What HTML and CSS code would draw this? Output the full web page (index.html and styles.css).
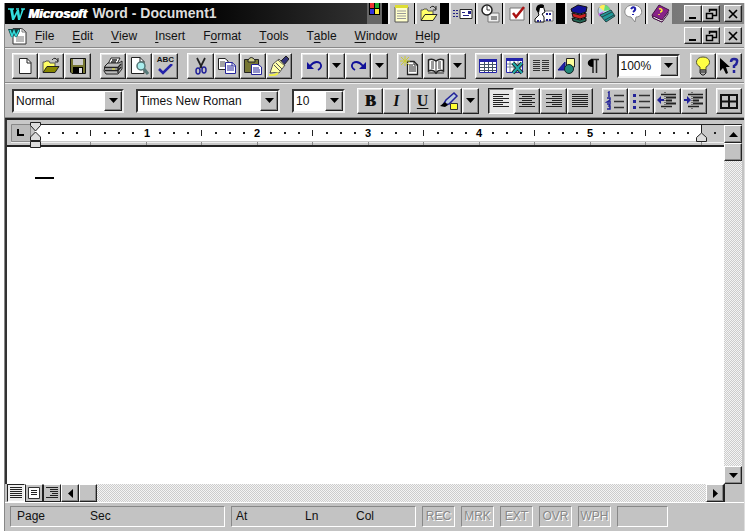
FILE: index.html
```html
<!DOCTYPE html>
<html lang="en">
<head>
<meta charset="utf-8">
<title>Microsoft Word - Document1</title>
<link rel="stylesheet" href="styles.css">
</head>
<body>
<svg class="defs" aria-hidden="true">
  <symbol id="down" viewBox="0 0 9 5"><path d="M0 0H9L4.500 5Z"/></symbol>
  <symbol id="min" viewBox="0 0 14 12"><path d="M3 9H10V11H3Z"/></symbol>
  <symbol id="restore" viewBox="0 0 14 12"><path d="M5.500 4V1.500H12.500V7.500H9M5 2H13M2.500 5.500H8.500V10.500H2.500ZM2 5.500H9" fill="none" stroke="#000" stroke-width="1.500"/></symbol>
  <symbol id="close" viewBox="0 0 14 12"><path d="M3 2L11 10M11 2L3 10" stroke="#000" stroke-width="1.700"/></symbol>
  <symbol id="folder" viewBox="0 0 20 20"><path d="M2 16V6H4L5 5H8L9 7H14V10" fill="#ff6" stroke="#555"/><path d="M2 16.500L6 10.500H18L14 16.500Z" fill="var(--front,#880)" stroke="#222"/><path d="M11 4Q14 0 17 5M17 2V6H14" fill="none" stroke="#222"/></symbol>
  <symbol id="lines-left" viewBox="0 0 20 20"><path d="M2 3.500H18M2 5.500H12M2 7.500H18M2 9.500H12M2 11.500H18M2 13.500H12M2 15.500H18" stroke="#222"/></symbol>
  <symbol id="lines-center" viewBox="0 0 20 20"><path d="M2 3.500H18M5 5.500H15M2 7.500H18M5 9.500H15M2 11.500H18M5 13.500H15M2 15.500H18" stroke="#222"/></symbol>
  <symbol id="lines-right" viewBox="0 0 20 20"><path d="M2 3.500H18M8 5.500H18M2 7.500H18M8 9.500H18M2 11.500H18M8 13.500H18M2 15.500H18" stroke="#222"/></symbol>
  <symbol id="lines-full" viewBox="0 0 20 20"><path d="M2 3.500H18M2 5.500H18M2 7.500H18M2 9.500H18M2 11.500H18M2 13.500H18M2 15.500H18" stroke="#222"/></symbol>
  <symbol id="undo" viewBox="0 0 20 20"><path d="M2 6V13H9Z" fill="#119"/><path d="M5 10Q10 4 15 7Q18 11 13 14" fill="none" stroke="#119" stroke-width="1.800"/></symbol>
  <symbol id="w" viewBox="0 0 18 16"><path d="M1 3H7M9 3H12M14 3H18" stroke="#3dd" stroke-width="1.500"/><path d="M3 3H6L7 10L10 4H12L13 10L15 3H17L13 14H11L10 8L7 14H5Z" fill="#3dd"/></symbol>
</svg>

<div class="window">
  <header class="titlebar">
    <svg class="logo"><use href="#w"/></svg>
    <h1><em>Microsoft</em> Word - Document1</h1>
    <div class="office">
      <span class="flag"><svg viewBox="0 0 15 20"><path d="M2 0H13V12H2Z"/><path d="M3 0H7V5H3Z" fill="#e33"/><path d="M8 0H12V5H8Z" fill="#2a3"/><path d="M3 6H7V11H3Z" fill="#33d"/><path d="M8 6H12V11H8Z" fill="#fe3"/></svg></span>
      <div class="set">
        <button aria-label="New document"><svg viewBox="0 0 20 20"><path d="M3 3H16V18H3Z" fill="#ffc" stroke="#555"/><path d="M3 1H16V4H3Z" fill="#dd3"/><path d="M5 7H14M5 9.500H14M5 12H14M5 14.500H14" stroke="#999"/></svg></button>
        <button aria-label="Open document" class="pale"><svg><use href="#folder"/></svg></button>
      </div>
      <div class="set">
        <button aria-label="Send message"><svg viewBox="0 0 20 20"><path d="M0 6.500H5M0 9.500H5M0 12.500H5" stroke="#228" stroke-dasharray="2 1"/><path d="M7 5.500H19V14.500H7Z" fill="#fff" stroke="#222"/><path d="M9 8.500H12M10 11.500H16" stroke="#228"/><path d="M15 7H18V10H15Z" fill="#228"/></svg></button>
        <button aria-label="Appointment"><svg viewBox="0 0 20 20"><path d="M8 9H19V18H8Z" fill="#eee" stroke="#777"/><circle cx="7" cy="6" r="5" fill="#fff" stroke="#222" stroke-width="1.500"/><path d="M7 2V6H10M11 13H17M11 15H17" fill="none" stroke="#333"/></svg></button>
        <button aria-label="Task"><svg viewBox="0 0 20 20"><path d="M3 4H17V16H3Z" fill="#fff" stroke="#777"/><path d="M6 9L9 13L17 3" fill="none" stroke="#a11" stroke-width="2.500"/></svg></button>
        <button aria-label="Contact"><svg viewBox="0 0 20 20"><path d="M8 7H19V17H8Z" fill="#fff" stroke="#777"/><path d="M3 5Q4 0 9 1L11 8L8 10L10 13V18H1V15L5 11Z" fill="#fff" stroke="#111"/><path d="M2 6Q2 -1 10 1L9 4H6L5 9Z"/><path d="M12 10H17M3 17H7M12 16H18" stroke="#228" stroke-width="2" stroke-dasharray="2 1"/></svg></button>
      </div>
      <div class="set">
        <button aria-label="Bookshelf"><svg viewBox="0 0 20 20"><path d="M2 5L9 1L18 3L17 8L11 10L3 8Z" fill="#119" stroke="#111"/><path d="M3 9L11 11L17 9V13L11 15L4 13Z" fill="#c22" stroke="#111"/><path d="M3 14L11 16L17 14V17L11 19L4 17Z" fill="#265" stroke="#111"/></svg></button>
        <button aria-label="Schedule"><svg viewBox="0 0 20 20"><circle cx="8" cy="7" r="6" fill="#bde" stroke="#888"/><path d="M8 7L3 3Q6 0 9 1Z" fill="#fe5"/><path d="M8 7L9 1Q13 2 14 6Z" fill="#6d7"/><path d="M8 7L2 10L4 13Z" fill="#b6d"/><path d="M4 11L15 6L19 12L10 18Z" fill="#299" stroke="#244"/><path d="M6 13L16 8M9 16L18 11" stroke="#244"/></svg></button>
        <button aria-label="Answer wizard"><svg viewBox="0 0 20 20"><path d="M10 1C21 1 21 13 13 13L12 18L8 13C-1 13 0 1 10 1Z" fill="#fff" stroke="#888"/><path d="M8 5Q10 2 12 4Q13 6 10 8M10 10V11" fill="none" stroke="#22a" stroke-width="2"/></svg></button>
        <button aria-label="Reference"><svg viewBox="0 0 20 20"><path d="M2 11L9 1L19 6L12 18L3 14Z" fill="#828" stroke="#414"/><path d="M3 12L12 16L18 8V10L12 18L3 14Z" fill="#fff" stroke="#414"/><path d="M9 5Q11 4 12 6Q12 8 10 8M9 10V11" fill="none" stroke="#fe3" stroke-width="1.500"/></svg></button>
      </div>
    </div>
    <div class="controls">
      <button aria-label="Minimize"><svg><use href="#min"/></svg></button><button aria-label="Restore"><svg><use href="#restore"/></svg></button><button aria-label="Close"><svg><use href="#close"/></svg></button>
    </div>
  </header>

  <nav class="menubar">
    <svg class="docicon" viewBox="0 0 20 18"><path d="M5 1.500H14L18 5V17H5Z" fill="#fff" stroke="#333"/><path d="M14 1V5H18M8 10H16M8 12H16M8 14H16" fill="none" stroke="#777"/><path d="M0 2H12V4L9 10H7L6 8L5 10H3Z" fill="#144"/><path d="M2 3L4 9L6 4L8 9L11 3" fill="none" stroke="#3dd" stroke-width="1.500"/></svg>
    <button><u>F</u>ile</button><button><u>E</u>dit</button><button><u>V</u>iew</button><button><u>I</u>nsert</button><button>F<u>o</u>rmat</button><button><u>T</u>ools</button><button>T<u>a</u>ble</button><button><u>W</u>indow</button><button><u>H</u>elp</button>
    <div class="controls">
      <button aria-label="Minimize document"><svg><use href="#min"/></svg></button><button aria-label="Restore document"><svg><use href="#restore"/></svg></button><button aria-label="Close document"><svg><use href="#close"/></svg></button>
    </div>
  </nav>

  <div class="toolbar">
    <div class="group g3">
      <button aria-label="New"><svg viewBox="0 0 20 20"><path d="M4.500 2.500H12L16 6.500V17.500H4.500Z" fill="#fff" stroke="#222"/><path d="M12 2V7H16" fill="none" stroke="#222"/></svg></button>
      <button aria-label="Open"><svg><use href="#folder"/></svg></button>
      <button aria-label="Save"><svg viewBox="0 0 20 20"><path d="M2.500 2.500H17.500V17.500H4L2.500 16Z" fill="#773" stroke="#111"/><path d="M5 3H15V9H5Z" fill="#ccc"/><path d="M5 11H15V17H5Z"/><path d="M11 12H14V17H11Z" fill="#ddd"/></svg></button>
    </div>
    <div class="group g3">
      <button aria-label="Print"><svg viewBox="0 0 20 20"><path d="M5 8L8 2H17L14 8Z" fill="#fff" stroke="#222"/><path d="M2 10L5 7H16L19 5V13L15 18H3L1 15Z" fill="#bbb" stroke="#222"/><path d="M1 11.500H15L18 8M2 14.500H15L18 11M15 11V17M9 4H14M8 6H13" fill="none" stroke="#222" stroke-width="1.300"/><path d="M9 13H12" stroke="#ee3"/></svg></button>
      <button aria-label="Print preview"><svg viewBox="0 0 20 20"><path d="M2.500 1.500H11L15 5.500V17.500H2.500Z" fill="#fff" stroke="#222"/><path d="M11 1V6H15" fill="none" stroke="#222"/><circle cx="12" cy="10" r="4" fill="#aee" stroke="#577" stroke-width="1.500"/><path d="M15 13L19 18" stroke="#577" stroke-width="3"/></svg></button>
      <button aria-label="Spelling" class="abc"><span>ABC</span><svg viewBox="0 0 20 12"><path d="M4 5L8 9L17 0" fill="none" stroke="#22a" stroke-width="2.500"/></svg></button>
    </div>
    <div class="group g4">
      <button aria-label="Cut"><svg viewBox="0 0 20 20"><path d="M6 2L11 12M14 2L9 12" stroke="#222" stroke-width="1.700"/><ellipse cx="7" cy="15" rx="2" ry="3" fill="none" stroke="#229" stroke-width="1.500"/><ellipse cx="13" cy="14" rx="2" ry="3" fill="none" stroke="#229" stroke-width="1.500"/></svg></button>
      <button aria-label="Copy"><svg viewBox="0 0 20 20"><path d="M1.500 2.500H8L11 5V13.500H1.500Z" fill="#fff" stroke="#222"/><path d="M3 6H8M3 8H9M3 10H9" stroke="#444"/><path d="M8.500 6.500H15L18.500 9.500V17.500H8.500Z" fill="#fff" stroke="#229"/><path d="M10 10H15M10 12H17M10 14H17M15 6V10H18" fill="none" stroke="#229"/></svg></button>
      <button aria-label="Paste"><svg viewBox="0 0 20 20"><path d="M1.500 3.500H15.500V16.500H1.500Z" fill="#773" stroke="#222"/><path d="M5 4Q8 -1 12 4V6H5Z" fill="#cc8" stroke="#222"/><path d="M8.500 8.500H15L18.500 11V18.500H8.500Z" fill="#fff" stroke="#229"/><path d="M10 12H16M10 14H17M10 16H17" stroke="#229"/></svg></button>
      <button aria-label="Format painter"><svg viewBox="0 0 20 20"><path d="M12 5L17 0L20 3L15 9Z" fill="#337" stroke="#222"/><path d="M4 8L10 3L16 9L10 17Q7 16 1 17Z" fill="#ffa" stroke="#555"/><path d="M5 9L11 15M7 7L13 13M9 4L16 10" stroke="#555"/><path d="M0 19Q6 20 9 17" fill="none" stroke="#ee4" stroke-width="2"/></svg></button>
    </div>
    <div class="group g2">
      <button aria-label="Undo"><svg><use href="#undo"/></svg></button><button class="drop" aria-label="Undo list"><svg><use href="#down"/></svg></button>
      <button aria-label="Redo" class="flip"><svg><use href="#undo"/></svg></button><button class="drop" aria-label="Redo list"><svg><use href="#down"/></svg></button>
    </div>
    <div class="group g2">
      <button aria-label="AutoFormat"><svg viewBox="0 0 20 20"><path d="M7.500 5.500H14L17.500 9V18.500H7.500Z" fill="#fff" stroke="#222" stroke-width="1.300"/><path d="M14 5V9H18M9 9H13M9 11H16M9 13H16M9 15H16" fill="none" stroke="#222"/><path d="M5 0V10M0 5H10M1 1L9 9M9 1L1 9" stroke="#cc3"/></svg></button>
      <button aria-label="Address book"><svg viewBox="0 0 20 20"><path d="M2.500 4Q6 2 10 5Q14 2 17.500 4V15Q13 13 10 17Q7 13 2.500 15Z" fill="#fff" stroke="#222" stroke-width="1.500"/><path d="M10 5V17M5 6H8M5 8H8M5 10H8M5 12H8M12 6H15M12 8H15M12 10H15M12 12H15M2 17H9L10 18L11 17H18" stroke="#333" fill="none"/></svg></button><button class="drop" aria-label="Address list"><svg><use href="#down"/></svg></button>
    </div>
    <div class="group g5">
      <button aria-label="Insert table"><svg viewBox="0 0 20 20"><path d="M1.500 3.500H18.500V16.500H1.500Z" fill="#fff" stroke="#22a"/><path d="M1 3H19V6H1Z" fill="#22a"/><path d="M2 8.500H18M2 11.500H18M2 14.500H18M6.500 6V16M10.500 6V16M14.500 6V16" stroke="#456"/></svg></button>
      <button aria-label="Insert worksheet"><svg viewBox="0 0 20 20"><path d="M1.500 2.500H17.500V16.500H1.500Z" fill="#fff" stroke="#22a"/><path d="M1 2H18V5H1Z" fill="#22a"/><path d="M2 8H17M2 11H17M5 5V16M9 5V16M13 5V16" stroke="#789"/><path d="M8 7L17 17M17 7L8 17" stroke="#222" stroke-width="4"/><path d="M8 7L17 17M17 7L8 17" stroke="#2aa" stroke-width="2"/></svg></button>
      <button aria-label="Columns"><svg viewBox="0 0 20 20"><path d="M2 4.500H9M2 6.500H9M2 8.500H9M2 10.500H9M2 12.500H9M2 14.500H9M11 4.500H18M11 6.500H18M11 8.500H18M11 10.500H18M11 12.500H18M11 14.500H18" stroke="#333"/></svg></button>
      <button aria-label="Drawing"><svg viewBox="0 0 20 20"><path d="M9.500 2.500H17.500V11H9.500Z" fill="#ff9" stroke="#222"/><path d="M1 14L8 6V14Z" fill="#22a" stroke="#118"/><circle cx="12" cy="13" r="4.500" fill="#287" stroke="#122"/></svg></button>
      <button aria-label="Show paragraph marks"><svg viewBox="0 0 20 20"><path d="M8 3.500H16M10 3V17M13.500 3V17" stroke="#222" stroke-width="1.500"/><path d="M10 3C3 3 3 11 10 11Z"/></svg></button>
    </div>
    <div class="combo zoom"><select aria-label="Zoom"><option>100%</option></select><span class="arrow"><svg><use href="#down"/></svg></span></div>
    <div class="group g2">
      <button aria-label="Tip wizard"><svg viewBox="0 0 20 20"><path d="M7 14V11C1 8 3 1 10 1S19 8 13 11V14Z" fill="#ff4" stroke="#553"/><path d="M7 14H13V17L11 19H9L7 17Z" fill="#aaa" stroke="#222"/><path d="M7 16H13" stroke="#222"/></svg></button>
      <button aria-label="Help"><svg viewBox="0 0 20 20"><path d="M1 2V15L4 12L7 18L9 17L7 11H11Z"/><path d="M12 6Q12 3 15 3Q19 3 18 6Q18 8 15 10V12M15 14V17" fill="none" stroke="#229" stroke-width="2.500"/></svg></button>
    </div>
  </div>

  <div class="toolbar format">
    <div class="combo style"><select aria-label="Style"><option>Normal</option></select><span class="arrow"><svg><use href="#down"/></svg></span></div>
    <div class="combo font"><select aria-label="Font"><option>Times New Roman</option></select><span class="arrow"><svg><use href="#down"/></svg></span></div>
    <div class="combo size"><select aria-label="Font size"><option>10</option></select><span class="arrow"><svg><use href="#down"/></svg></span></div>
    <div class="group g4">
      <button class="letter"><b>B</b></button><button class="letter"><i>I</i></button><button class="letter"><u>U</u></button>
      <button aria-label="Highlight"><svg viewBox="0 0 20 20"><path d="M4 14L7 9L15 2L18 5L10 13Z" fill="#bcd" stroke="#229" stroke-width="1.500"/><path d="M1 15L6 11L9 14L6 16Z"/><path d="M11.500 12.500H18.500V18.500H11.500Z" fill="#ff3" stroke="#333"/></svg></button><button class="drop" aria-label="Highlight colors"><svg><use href="#down"/></svg></button>
    </div>
    <div class="group g4">
      <button class="pressed" aria-label="Align left"><svg><use href="#lines-left"/></svg></button><button aria-label="Center"><svg><use href="#lines-center"/></svg></button><button aria-label="Align right"><svg><use href="#lines-right"/></svg></button><button aria-label="Justify"><svg><use href="#lines-full"/></svg></button>
    </div>
    <div class="group g4">
      <button aria-label="Numbering"><svg viewBox="0 0 20 20"><path d="M9 4.500H19M9 10.500H19M9 16.500H19" stroke="#333" stroke-width="1.500"/><path d="M3 2L4 1V6M2 7H5V9L2 11H6M2 13H5L4 15H5V18H2" fill="none" stroke="#229" stroke-width="1.500"/></svg></button>
      <button aria-label="Bullets"><svg viewBox="0 0 20 20"><path d="M8 4.500H19M8 10.500H19M8 16.500H19" stroke="#333" stroke-width="1.500"/><path d="M2 3H5V6H2ZM2 9H5V12H2ZM2 15H5V18H2Z" fill="#229"/></svg></button>
      <button aria-label="Decrease indent"><svg viewBox="0 0 20 20"><path d="M4 3.500H19M4 15.500H15" stroke="#222" stroke-width="1.500"/><path d="M9 6.500H19M9 9.500H15M9 12.500H19" stroke="#222" stroke-width="2"/><path d="M8 1V18" stroke="#222" stroke-dasharray="1 1"/><path d="M0 9L4 5V8H7V10H4V13Z" fill="#229"/></svg></button>
      <button aria-label="Increase indent"><svg viewBox="0 0 20 20"><path d="M4 3.500H19M4 15.500H15" stroke="#222" stroke-width="1.500"/><path d="M9 6.500H19M9 9.500H15M9 12.500H19" stroke="#222" stroke-width="2"/><path d="M8 1V18" stroke="#222" stroke-dasharray="1 1"/><path d="M7 9L3 5V8H0V10H3V13Z" fill="#229"/></svg></button>
    </div>
    <div class="group g1"><button aria-label="Borders"><svg viewBox="0 0 20 20"><path d="M2 4H18V17H2ZM10 4V17M2 10.500H18" fill="none" stroke="#111" stroke-width="2"/></svg></button></div>
  </div>

  <div class="workspace">
    <div class="sheet">
      <svg class="ruler" role="img" aria-label="Ruler">
        <defs>
          <pattern id="ticks" x="28" y="0" width="111" height="28" patternUnits="userSpaceOnUse">
            <path d="M13 12h2v2h-2zM27 12h2v2h-2zM41 12h2v2h-2zM55 10h1v6h-1zM69 12h2v2h-2zM83 12h2v2h-2zM97 12h2v2h-2z" fill="#222"/>
            <path d="M0 22h1v3h-1zM55 22h1v3h-1z" fill="#888"/>
          </pattern>
        </defs>
        <path d="M4.500 4.500H23.500V21.500H4.500Z" fill="#bbb" stroke="#888"/>
        <path d="M10 9H12V14H17V16H10Z"/>
        <rect x="28" y="5" width="666" height="16" fill="#fff"/>
        <rect x="24" y="4" width="100%" height="1" fill="#222"/>
        <rect x="4" y="22" width="100%" height="1" fill="#eee"/>
        <rect x="29" y="5" width="100%" height="20" fill="url(#ticks)"/>
        <g class="numbers"><text x="140" y="17">1</text><text x="250" y="17">2</text><text x="361" y="17">3</text><text x="472" y="17">4</text><text x="583" y="17">5</text></g>
        <path d="M23.500 2.500H33.500V5.500L28.500 11L23.500 5.500ZM28.500 12L33.500 17V20.500H23.500V17ZM23.500 21.500H33.500V27.500H23.500Z" fill="#ddd" stroke="#222"/>
        <path d="M694.500 5V13" stroke="#222"/>
        <path d="M694.500 13L699.500 17.500V21.500H689.500V17.500Z" fill="#ddd" stroke="#222"/>
        <rect x="34" y="25" width="100%" height="2" fill="#222"/><rect y="25" width="23" height="2" fill="#222"/>
      </svg>
      <main class="page" contenteditable="true" spellcheck="false" aria-label="Document"><div class="end"></div></main>
    </div>
    <div class="vscroll">
      <span class="split"></span>
      <button aria-label="Scroll up"><svg class="up"><use href="#down"/></svg></button>
      <span class="thumb"></span>
      <button class="last" aria-label="Scroll down"><svg><use href="#down"/></svg></button>
    </div>
  </div>

  <div class="hscroll">
    <button class="view on" aria-label="Normal view"><svg viewBox="0 0 14 14"><path d="M1 1.500H13M1 3.500H13M1 5.500H13M1 7.500H13M1 9.500H13M1 11.500H13" stroke="#222"/></svg></button><button class="view" aria-label="Page layout view"><svg viewBox="0 0 14 14"><path d="M1.500 1.500H12.500V12.500H1.500Z" fill="#fff" stroke="#333"/><path d="M4 4.500H10M4 6.500H10M4 8.500H10" stroke="#222"/></svg></button><button class="view" aria-label="Outline view"><svg viewBox="0 0 14 14"><path d="M1 1.500H13M5 3.500H13M5 5.500H13M7 7.500H13M5 9.500H13M1 11.500H13" stroke="#222"/></svg></button>
    <button class="step" aria-label="Scroll left"><svg viewBox="0 0 5 9"><path d="M5 0V9L0 4.500Z"/></svg></button><span class="thumb"></span>
    <button class="step last" aria-label="Scroll right"><svg viewBox="0 0 5 9"><path d="M0 0V9L5 4.500Z"/></svg></button><span class="corner"></span>
  </div>

  <footer class="status">
    <div class="panel pages"><span>Page</span><span>Sec</span></div>
    <div class="panel place"><span>At</span><span>Ln</span><span>Col</span></div>
    <div class="panel mode">REC</div><div class="panel mode">MRK</div><div class="panel mode">EXT</div><div class="panel mode">OVR</div><div class="panel mode">WPH</div>
    <div class="panel blank"></div>
  </footer>
</div>
</body>
</html>
```
FILE: styles.css
```css
* { box-sizing: border-box; }

body {
  margin: 0;
  background: #fff;
  color: #111;
  font: 12px/16px "Liberation Sans", Arial, sans-serif;
}

button {
  display: flex;
  align-items: center;
  justify-content: center;
  padding: 0;
  border: 0;
  background: #c3c3c3;
  color: inherit;
  font: inherit;
}

svg { display: block; flex: none; }
u { text-underline-offset: 2px; }
.defs { position: absolute; width: 0; height: 0; }

.window {
  display: flex;
  flex-direction: column;
  min-height: calc(100vh - 3px);
  margin: 3px 5px 0 4px;
  border-left: 1px solid #888;
  border-right: 1px solid #ddd;
  background: #c3c3c3;
}

/* Title bar */
.titlebar {
  display: flex;
  align-items: center;
  height: 21px;
  background: linear-gradient(90deg, #000 0 25%, #333 50%, #888);
}
.logo { width: 18px; height: 16px; margin: 0 3px 0 2px; }
h1 {
  flex: 1;
  margin: 0;
  color: #ddd;
  font: bold 14px/20px "Liberation Sans", sans-serif;
  white-space: nowrap;
}
h1 em { margin-right: 2px; color: #fff; font-size: 13px; text-shadow: 1px 0 #fff; }
.office { display: flex; height: 21px; margin-right: 12px; background: #000; gap: 9px; }
.office .set { display: flex; gap: 1px; }
.office .flag { width: 15px; margin-right: -3px; background: #666; }
.office .flag svg { width: 15px; height: 20px; }
.office button { width: 26px; border-left: 2px solid #eee; }
.office button svg { width: 20px; height: 20px; }
.office .set:nth-child(2) button:last-child { width: 25px; }
.pale { --front: #ff7; }

.controls { display: flex; margin-right: 2px; }
.controls button {
  width: 18px;
  height: 17px;
  border: 1px solid;
  border-color: #fff #222 #222 #fff;
  box-shadow: inset -1px -1px #888;
}
.controls button:last-child { margin-left: 4px; }
.controls svg { width: 14px; height: 12px; }

/* Menu bar */
.menubar { display: flex; align-items: center; height: 24px; border-bottom: 1px solid #888; }
.docicon { width: 20px; height: 18px; margin: 0 7px 0 3px; }
.menubar > button { margin-right: 18px; }
.menubar .controls { margin-left: auto; }

/* Toolbars */
.toolbar {
  display: flex;
  align-items: center;
  gap: 9px;
  height: 35px;
  padding: 0 2px 0 7px;
  border-top: 1px solid #eee;
  border-bottom: 1px solid #888;
}
.group { display: flex; flex-basis: auto; }
.g1 { flex-grow: 1; }
.g2 { flex-grow: 2; }
.g3 { flex-grow: 3; }
.g4 { flex-grow: 4; }
.g5 { flex-grow: 5; }
.group button {
  flex: 1 0 26px;
  height: 26px;
  border: 1px solid;
  border-color: #fff #222 #222 #fff;
  box-shadow: inset -1px -1px #888, inset 1px 1px #e4e4e4;
}
.group button svg { width: 20px; height: 20px; }
.group .drop { flex: 0 0 17px; }
.group .drop svg, .arrow svg { width: 9px; height: 5px; }
.flip svg { transform: scaleX(-1); }
.group .abc { flex-direction: column; font: bold 8px/8px "Liberation Sans", sans-serif; }
.group .abc svg { height: 12px; }
.group .pressed {
  border-color: #222 #fff #fff #222;
  background: #e8e8e8;
  box-shadow: inset 1px 1px #888;
}
.group .letter { font: bold 16px/20px "Liberation Serif", serif; }
.letter b { text-shadow: 1px 0 #111; }

.combo {
  display: flex;
  height: 24px;
  border: 2px solid;
  border-color: #333 #eee #eee #333;
  background: #fff;
}
.combo select {
  flex: 1;
  min-width: 0;
  padding: 0 0 0 2px;
  border: 0;
  background: #fff;
  color: #111;
  font: inherit;
  appearance: none;
}
.arrow {
  display: flex;
  align-items: center;
  justify-content: center;
  width: 18px;
  border: 1px solid;
  border-color: #fff #222 #222 #fff;
  background: #c3c3c3;
  box-shadow: inset -1px -1px #888;
}
.zoom { width: 63px; margin: 0 1px; }
.format .combo { margin-right: 3px; }
.style { width: 112px; }
.font { width: 144px; }
.size { width: 53px; }

/* Document area */
.workspace {
  display: flex;
  flex: 1;
  padding-right: 2px;
  border-top: 2px solid #222;
  border-left: 2px solid #333;
}
.sheet { display: flex; flex: 1; flex-direction: column; min-width: 0; }
.ruler { width: 100%; height: 28px; background: linear-gradient(#c8c8c8 27px, #fff 27px); }
.numbers { font: bold 11px "Liberation Sans", sans-serif; text-anchor: middle; }
.page { flex: 1; padding: 29px 28px; background: #fff; outline: 0; }
.end { width: 19px; height: 2px; background: #000; }

.vscroll, .hscroll {
  background: repeating-conic-gradient(#ccc 0 25%, #f4f4f4 0 50%) 0 0 / 2px 2px;
}
.vscroll { display: flex; flex-direction: column; width: 18px; }
.vscroll .split { height: 5px; border-bottom: 1px solid #222; background: #c3c3c3; }
.vscroll button, .vscroll .thumb, .step, .hscroll .thumb {
  height: 18px;
  border: 1px solid;
  border-color: #fff #222 #222 #fff;
  background: #c3c3c3;
  box-shadow: inset -1px -1px #888;
}
.vscroll svg { width: 9px; height: 5px; }
.vscroll .up { transform: rotate(180deg); }
.vscroll .last, .hscroll .last { margin-top: auto; }

.hscroll { display: flex; height: 18px; margin: 0 2px 0 2px; }
.view {
  width: 18px;
  height: 18px;
  border: 1px solid #222;
  border-top-color: #fff;
}
.view.on { border-color: #222 #fff #fff #222; background: #eee; }
.view svg { width: 14px; height: 14px; }
.step, .hscroll .thumb { width: 18px; }
.step svg { width: 5px; height: 9px; }
.hscroll .last { margin-left: auto; }
.corner { width: 18px; border-left: 1px solid #222; background: #c3c3c3; }

/* Status bar */
.status {
  display: flex;
  gap: 6px;
  padding: 3px 5px 4px;
  border-top: 1px solid #fff;
}
.panel {
  display: flex;
  height: 21px;
  padding: 1px 4px;
  border: 1px solid;
  border-color: #888 #fff #fff #888;
}
.pages { width: 215px; padding-left: 6px; }
.pages span { width: 73px; }
.place { width: 185px; }
.place span:first-child { width: 69px; }
.place span { width: 51px; }
.mode {
  justify-content: center;
  width: 33px;
  color: #888;
  text-shadow: 1px 1px #fff;
}
.blank { width: 51px; }
```
